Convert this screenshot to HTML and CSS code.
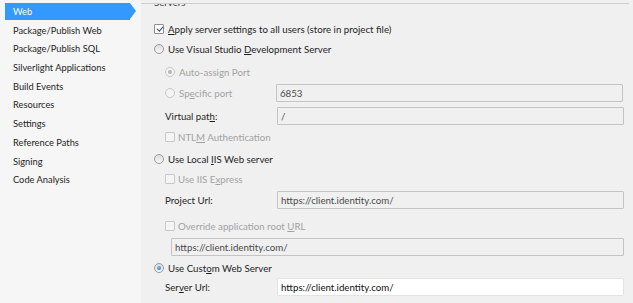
FILE: index.html
```html
<!DOCTYPE html>
<html lang="en">
<head>
    <meta charset="UTF-8">
    <title>Project Properties - Web</title>
    <link rel="stylesheet" href="styles.css">
</head>
<body>

    <div class="nav">
        <div class="nav-item active">Web</div>
        <div class="nav-item">Package/Publish Web</div>
        <div class="nav-item">Package/Publish SQL</div>
        <div class="nav-item">Silverlight Applications</div>
        <div class="nav-item">Build Events</div>
        <div class="nav-item">Resources</div>
        <div class="nav-item">Settings</div>
        <div class="nav-item">Reference Paths</div>
        <div class="nav-item">Signing</div>
        <div class="nav-item">Code Analysis</div>
    </div>

    <div class="content">
        <div class="group-title">Servers</div>

        <div class="row r-apply">
            <span class="check checked"></span>
            <span class="label"><u>A</u>pply server settings to all users (store in project file)</span>
        </div>

        <div class="row r-vs">
            <span class="radio"></span>
            <span class="label">Use Visual Studio <u>D</u>evelopment Server</span>
        </div>

        <div class="row sub r-auto disabled">
            <span class="radio checked"></span>
            <span class="label">Auto-assign Port</span>
        </div>

        <div class="row sub r-port disabled">
            <span class="radio"></span>
            <span class="label field-label">Sp<u>e</u>cific port</span>
            <div class="box">6853</div>
        </div>

        <div class="row sub r-path">
            <span class="label field-label">Virtual pat<u>h</u>:</span>
            <div class="box">/</div>
        </div>

        <div class="row sub r-ntlm disabled">
            <span class="check"></span>
            <span class="label">NTL<u>M</u> Authentication</span>
        </div>

        <div class="row r-iis">
            <span class="radio"></span>
            <span class="label">Use Local <u>I</u>IS Web server</span>
        </div>

        <div class="row sub r-express disabled">
            <span class="check"></span>
            <span class="label">Use IIS E<u>x</u>press</span>
        </div>

        <div class="row sub r-project">
            <span class="label field-label">Pro<u>j</u>ect Url:</span>
            <div class="box">https://client.identity.com/</div>
        </div>

        <div class="row sub r-override disabled">
            <span class="check"></span>
            <span class="label">Override application root <u>U</u>RL</span>
        </div>

        <div class="row r-rootbox">
            <div class="box wide">https://client.identity.com/</div>
        </div>

        <div class="row r-custom">
            <span class="radio checked on"></span>
            <span class="label">Use Cust<u>o</u>m Web Server</span>
        </div>

        <div class="row sub r-server">
            <span class="label field-label">Ser<u>v</u>er Url:</span>
            <div class="box enabled">https://client.identity.com/</div>
        </div>
    </div>

</body>
</html>
```

FILE: styles.css
```css
body { margin: 0; width: 633px; height: 303px; display: flex; background: #f0f0f0; font-family: Lato, "Liberation Sans", sans-serif; font-size: 9.7px; color: #1e1e1e; overflow: hidden; }

/* left category list */
.nav { width: 141px; background: #f6f6f6; padding: 3px 0 0 5px; box-sizing: border-box; flex-shrink: 0; font-size: 9.3px; }
.nav-item { height: 18.7px; line-height: 18.7px; padding-left: 8px; white-space: nowrap; position: relative; width: 125px; box-sizing: border-box; }
.nav-item.active { background: #3399ff; color: white; height: 17px; line-height: 17px; margin-bottom: 1.7px; }
.nav-item.active::after { content: ""; position: absolute; right: -6px; top: 0; border-left: 6px solid #3399ff; border-top: 8.5px solid transparent; border-bottom: 8.5px solid transparent; }

/* right panel */
.content { margin-top: 3px; width: 488px; border-top: 1px solid #cfcfcf; overflow: hidden; flex-shrink: 0; box-sizing: border-box; padding-left: 13px; }
.group-title { margin-top: -9px; height: 15px; line-height: 15px; color: #333; }

.row { display: flex; align-items: center; height: 20px; }
.row.sub { padding-left: 11px; }
.label { white-space: nowrap; }
.field-label { width: 112px; }
.disabled .label { color: #a2a2a2; }

.r-apply { margin-top: 9px; }
.r-auto { margin-top: 3px; }
.r-port { margin-top: 1px; }
.r-path { margin-top: 3px; padding-left: 12px; }
.r-ntlm { margin-top: 1px; }
.r-iis { margin-top: 2px; }
.r-project { margin-top: 1px; padding-left: 12px; }
.r-override { margin-top: 6px; }
.r-rootbox { margin-top: 1px; padding-left: 17px; }
.r-custom { margin-top: 1px; }
.r-server { margin-top: -1px; padding-left: 12px; }

.r-port .field-label { width: 97px; }

/* inputs */
.box { width: 347px; height: 18px; box-sizing: border-box; border: 1px solid #c4c4c4; background: #f0f0f0; border-radius: 1px; padding: 0 3px; line-height: 16px; color: #4a4a4a; white-space: nowrap; overflow: hidden; }
.box.wide { width: 453px; }
.box.enabled { background: #fff; border-color: #e3e3e3; color: #111; }

/* radio and check glyphs */
.radio, .check { width: 10px; height: 10px; box-sizing: border-box; flex-shrink: 0; margin-right: 4px; position: relative; border: 1px solid #9a9a9a; background: linear-gradient(#dcdcdc, #f8f8f8); }
.radio { border-radius: 50%; }
.check { border-radius: 1px; background: #fcfcfc; border-color: #8e8e8e; }
.disabled .radio, .disabled .check { border-color: #c8c8c8; background: #f4f4f4; }
.radio.checked::after { content: ""; position: absolute; left: 2px; top: 2px; width: 4px; height: 4px; border-radius: 50%; background: #b4b4b4; }
.radio.checked.on::after { background: radial-gradient(circle at 40% 35%, #7cc4f4, #1b5fa8); }
.check.checked::after { content: ""; position: absolute; left: 2.5px; top: 0; width: 2.5px; height: 5px; border: solid #2c4f8c; border-width: 0 1.5px 1.5px 0; transform: rotate(40deg); }
.r-ntlm .check, .r-express .check, .r-override .check { margin-right: 3px; }
```
